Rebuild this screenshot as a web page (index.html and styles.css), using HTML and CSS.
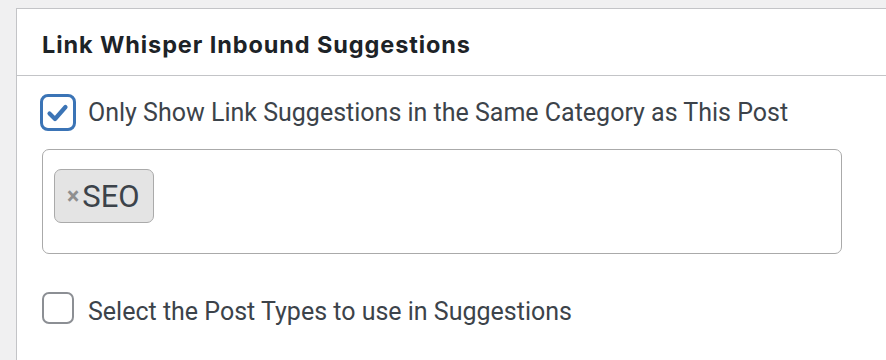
FILE: index.html
```html
<!DOCTYPE html>
<html>
<head>
<meta charset="utf-8">
<link rel="stylesheet" href="styles.css">
</head>
<body>
<div class="panel">
  <div class="panel-head">
    <h2 class="panel-title">Link Whisper Inbound Suggestions</h2>
  </div>
  <div class="panel-body">
    <label class="check-row first">
      <span class="box checked">
        <svg viewBox="0 0 30 30" width="30" height="30"><path d="M6.5 15.5 L12 21 L22.5 9" fill="none" stroke="#3b74b6" stroke-width="4.2" stroke-linecap="round" stroke-linejoin="round"/></svg>
      </span>
      <span class="check-label">Only Show Link Suggestions in the Same Category as This Post</span>
    </label>
    <div class="tag-box">
      <span class="chip"><span class="chip-x">×</span><span class="chip-text">SEO</span></span>
    </div>
    <label class="check-row second">
      <span class="box"></span>
      <span class="check-label">Select the Post Types to use in Suggestions</span>
    </label>
  </div>
</div>
</body>
</html>
```
FILE: styles.css
```css
html, body {
  margin: 0;
  padding: 0;
  background: #f0f0f1;
  overflow: hidden;
  width: 886px;
  height: 360px;
}
body {
  padding: 8px 0 0 16px;
  box-sizing: border-box;
  font-family: Roboto, "Liberation Sans", sans-serif;
}
.panel {
  width: 900px;
  height: 400px;
  background: #fff;
  border: 1px solid #c3c4c7;
  box-sizing: border-box;
}
.panel-head {
  box-sizing: border-box;
  height: 67px;
  border-bottom: 1px solid #c3c4c7;
  padding: 5px 0 0 25px;
  display: flex;
  align-items: center;
}
.panel-title {
  margin: 0;
  font-family: Inter, "Liberation Sans", sans-serif;
  font-weight: 700;
  font-size: 23.5px;
  color: #1d2327;
  letter-spacing: 0.9px;
}
.panel-body {
  padding: 18px 0 0 23px;
}
.check-row {
  display: flex;
  align-items: center;
  color: #3c434a;
  font-size: 25px;
}
.box {
  box-sizing: border-box;
  flex: none;
  width: 32px;
  height: 32px;
  border: 2px solid #8c8f94;
  border-radius: 7px;
  margin-right: 14px;
  margin-left: 2px;
  display: flex;
  align-items: center;
  justify-content: center;
  background: #fff;
}
.box.checked {
  width: 36px;
  height: 37px;
  border: 3.5px solid #3b74b6;
  border-radius: 8px;
  margin-left: 0;
  margin-right: 12px;
}
.check-label {
  line-height: 30px;
}
.tag-box {
  box-sizing: border-box;
  margin: 18px 0 0 2px;
  width: 800px;
  height: 105px;
  border: 1.5px solid #aaa;
  border-radius: 7px;
  padding: 19px 0 0 11px;
}
.chip {
  box-sizing: border-box;
  display: inline-flex;
  align-items: center;
  height: 54px;
  width: 100px;
  background: #e4e4e4;
  border: 1.5px solid #aaa;
  border-radius: 7px;
  padding-left: 12px;
}
.chip-x {
  color: #8f8f8f;
  font-weight: 700;
  font-size: 23px;
  margin-right: 3px;
}
.chip-text {
  color: #3c434a;
  font-size: 31px;
}
.second {
  margin-top: 38px;
  align-items: flex-start;
}
.second .check-label {
  margin-top: 5px;
}
```
